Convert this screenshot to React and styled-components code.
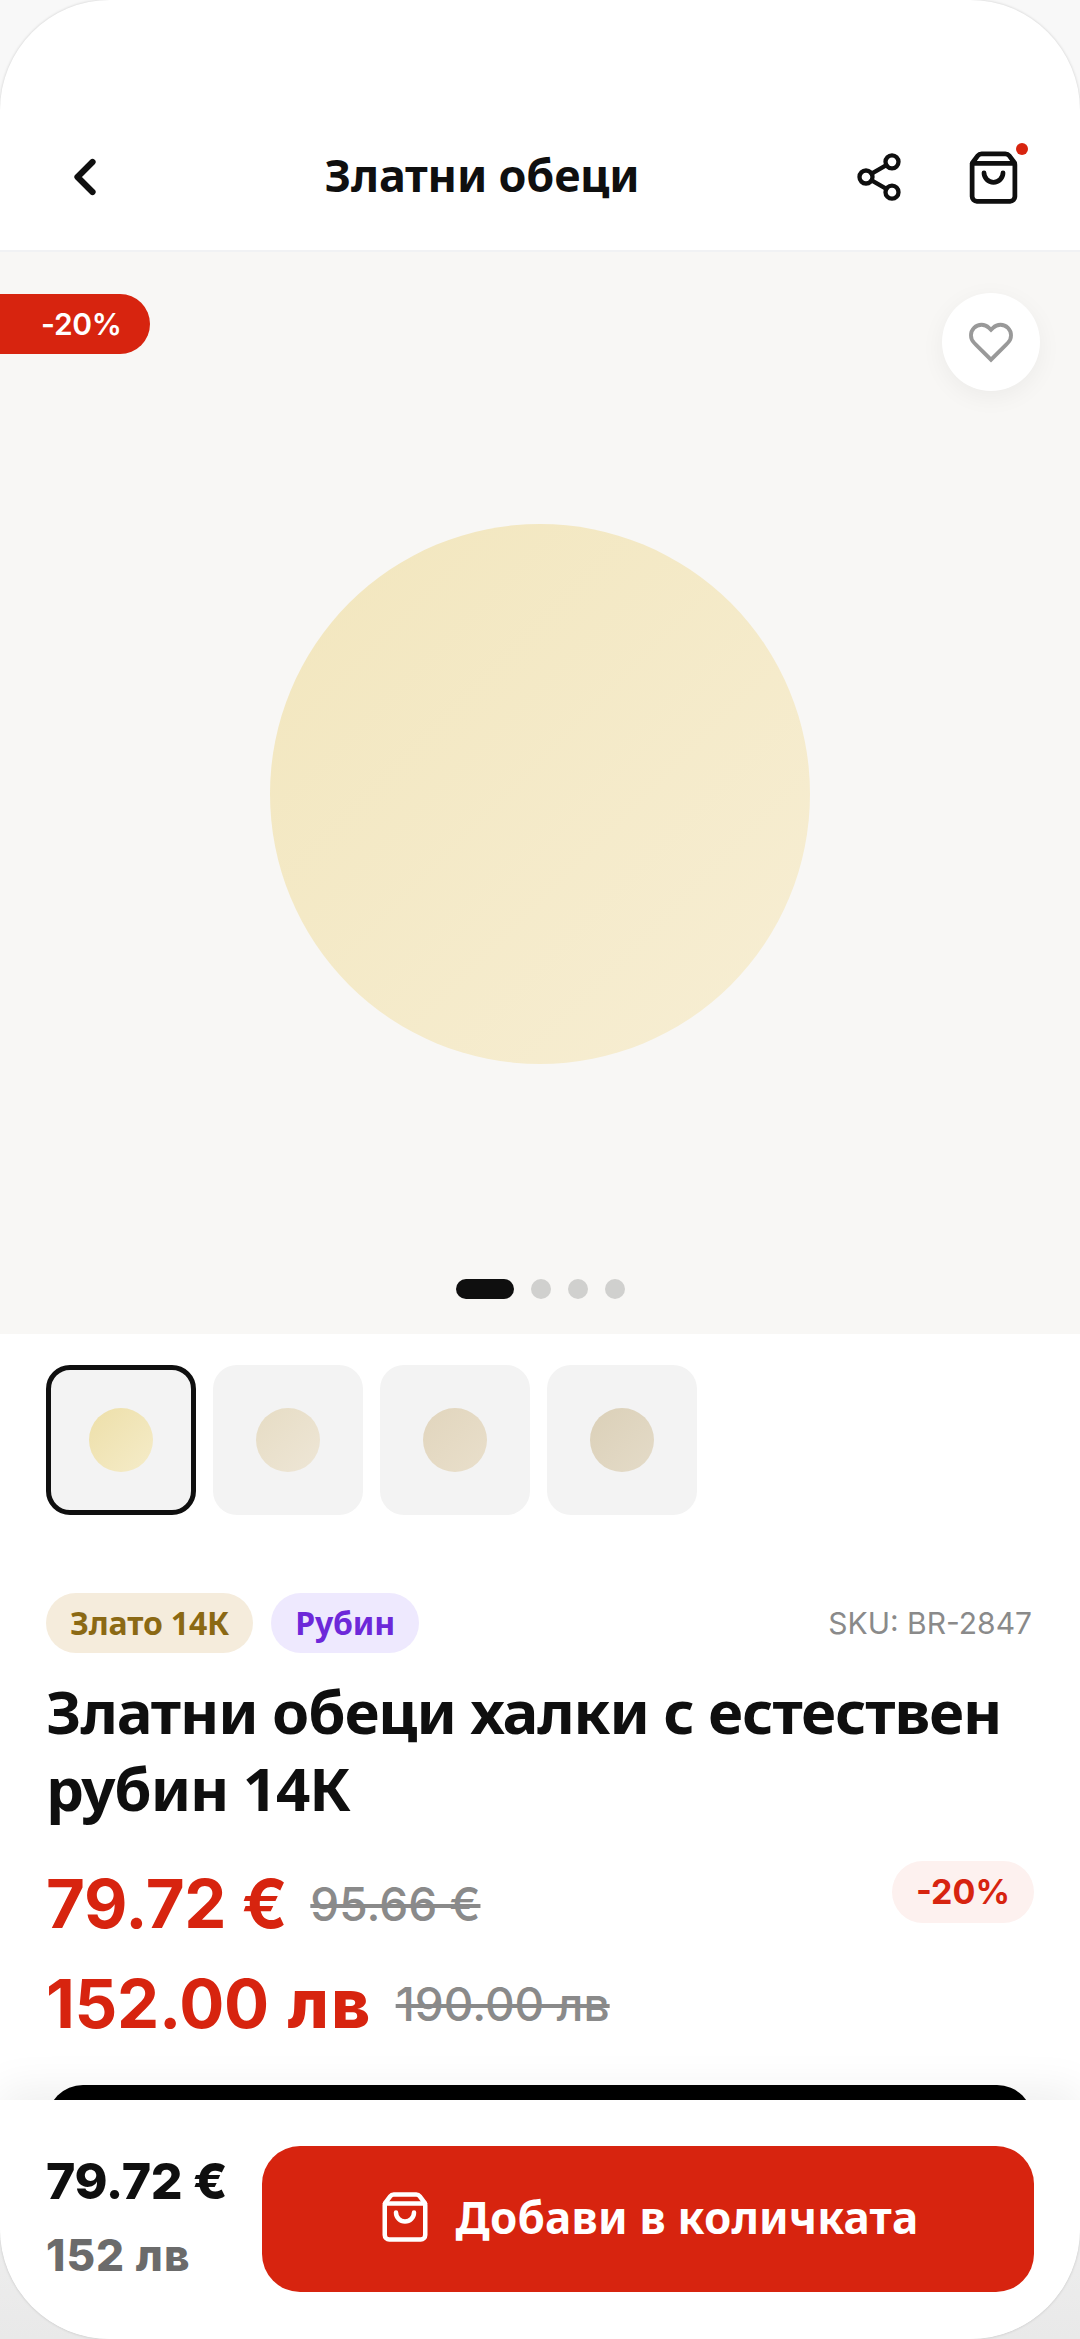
import React from 'react';
import styled, { createGlobalStyle } from 'styled-components';
import { ChevronLeft, Share2, ShoppingBag } from 'lucide-react';

const GlobalStyle = createGlobalStyle`
  html {
    background: linear-gradient(#f8f8f8 0, #f8f8f8 2000px, #e9e9e9 2339px);
  }
  body {
    margin: 0;
    padding: 0;
  }
`;

const RED = '#d7240f';
const INK = '#0f0f0f';
const INTER = 'Inter, "Liberation Sans", sans-serif';
const NOTO = '"Noto Sans", "Open Sans", sans-serif';

const Phone = styled.div`
  position: relative;
  width: 1080px;
  height: 2339px;
  overflow: hidden;
  background: #fff;
  border-radius: 110px;
  box-shadow: 0 0 3px rgba(0, 0, 0, 0.18);
  font-family: ${INTER};
  color: ${INK};
`;

const Header = styled.header`
  height: 252px;
  box-sizing: border-box;
  padding: 148px 58px 0 52px;
  display: flex;
  align-items: flex-start;
  border-bottom: 2px solid #f1f2f4;
`;

const IconBox = styled.div`
  position: relative;
  width: ${p => p.$w}px;
  height: 58px;
  flex: none;
  display: flex;
  align-items: center;
  justify-content: center;
`;

const HeaderTitle = styled.h1`
  flex: 1;
  margin: 0;
  padding-right: 7px;
  font: 700 45px/54px ${NOTO};
  letter-spacing: -0.2px;
  text-align: center;
  white-space: nowrap;
`;

const HeaderActions = styled.div`
  display: flex;
  gap: 60px;
  align-items: center;
`;

const CartDot = styled.span`
  position: absolute;
  top: -5px;
  right: -6px;
  width: 12px;
  height: 12px;
  border-radius: 50%;
  background: ${RED};
`;

const Gallery = styled.section`
  position: relative;
  height: 1082px;
  background: #f8f7f5;
  display: flex;
  flex-direction: column;
  align-items: center;
`;

const Jewel = styled.div`
  width: 540px;
  height: 540px;
  margin-top: 272px;
  border-radius: 50%;
  background: linear-gradient(135deg, #f2e6bd 0%, #f7eed4 100%);
`;

const Dots = styled.div`
  display: flex;
  gap: 17px;
  margin-top: 215px;
`;

const Dot = styled.span`
  height: 20px;
  width: ${p => (p.$active ? 58 : 20)}px;
  border-radius: 10px;
  background: ${p => (p.$active ? INK : '#d0d0ce')};
`;

const SaleFlag = styled.div`
  position: absolute;
  left: 0;
  top: 42px;
  width: 150px;
  height: 60px;
  box-sizing: border-box;
  padding-left: 41px;
  border-radius: 0 30px 30px 0;
  background: ${RED};
  color: #fff;
  font: 600 30px/60px ${INTER};
  letter-spacing: -0.3px;
`;

const FavButton = styled.button`
  position: absolute;
  top: 41px;
  right: 40px;
  width: 98px;
  height: 98px;
  padding: 0;
  border: 0;
  border-radius: 50%;
  background: #fff;
  box-shadow: 0 6px 24px rgba(0, 0, 0, 0.05);
  display: flex;
  align-items: center;
  justify-content: center;
`;

const Thumbs = styled.div`
  display: flex;
  gap: 17px;
  padding: 31px 46px 0;
`;

const Thumb = styled.div`
  width: 150px;
  height: 150px;
  box-sizing: border-box;
  border-radius: 24px;
  background: #f3f3f3;
  border: ${p => (p.$active ? `5px solid ${INK}` : 'none')};
  display: flex;
  align-items: center;
  justify-content: center;
`;

const ThumbDot = styled.span`
  width: 64px;
  height: 64px;
  border-radius: 50%;
  background: ${p => p.$bg};
`;

const Info = styled.section`
  padding: 78px 47px 0 46px;
`;

const MetaRow = styled.div`
  display: flex;
  align-items: center;
  gap: 18px;
`;

const Tag = styled.span`
  height: 60px;
  padding: 0 24px;
  border-radius: 30px;
  background: ${p => p.$bg};
  color: ${p => p.$fg};
  font: 700 32px/60px ${NOTO};
  letter-spacing: -0.15px;
  white-space: nowrap;
`;

const Sku = styled.span`
  margin-left: auto;
  margin-right: 1px;
  color: #8a8a8a;
  font: 400 30px/60px ${INTER};
`;

const ProductTitle = styled.h2`
  margin: 20px 0 0;
  font: 700 60px/77px ${NOTO};
  letter-spacing: -1.1px;
`;

const PriceBlock = styled.div`
  position: relative;
  margin-top: 27px;
`;

const PriceRow = styled.div`
  display: flex;
  align-items: center;
  gap: 23px;
  height: 100px;
`;

const Price = styled.span`
  color: ${RED};
  font: 700 67px/100px ${INTER};
  letter-spacing: -0.3px;
`;

const Unit = styled.span`
  margin-left: 3px;
  font-weight: 800;
  letter-spacing: 2.5px;
`;

const OldPrice = styled.span`
  color: #8a8a8a;
  font: 500 46px/100px ${INTER};
  text-decoration: line-through;
`;

const SaleChip = styled.span`
  position: absolute;
  right: -1px;
  top: 7px;
  height: 62px;
  padding: 0 24px;
  border-radius: 31px;
  background: #fdf1ef;
  color: ${RED};
  font: 700 34px/62px ${INTER};
`;

const BuyNow = styled.div`
  position: absolute;
  left: 47px;
  right: 47px;
  top: 2085px;
  height: 100px;
  border-radius: 36px;
  background: #000;
`;

const BottomBar = styled.footer`
  position: absolute;
  left: 0;
  right: 0;
  bottom: 0;
  height: 239px;
  box-sizing: border-box;
  padding: 46px 46px 0 46px;
  background: #fff;
  box-shadow: 0 -10px 44px rgba(0, 0, 0, 0.07);
  border-radius: 0 0 110px 110px;
  display: flex;
  align-items: flex-start;
  gap: 36px;
`;

const Totals = styled.div`
  width: 180px;
  flex: none;
  display: flex;
  flex-direction: column;
  padding-top: 5px;
`;

const TotalMain = styled.span`
  font: 800 50px/60px ${INTER};
  letter-spacing: -0.3px;
  white-space: nowrap;
`;

const TotalSub = styled.span`
  margin-top: 14px;
  color: #6b6b6b;
  font: 800 44px/60px ${INTER};
  letter-spacing: 1px;
  white-space: nowrap;
`;

const AddButton = styled.button`
  flex: 1;
  height: 146px;
  padding: 0 0 5px;
  border: 0;
  border-radius: 38px;
  background: ${RED};
  color: #fff;
  font: 700 44px/60px ${NOTO};
  letter-spacing: 0.2px;
  display: flex;
  align-items: center;
  justify-content: center;
  gap: 24px;
`;

const HeartIcon = () => (
  <svg width="46" height="46" viewBox="0 0 24 24" fill="none" stroke="#999" strokeWidth="2">
    <path d="M20.84 4.61a5.5 5.5 0 0 0-7.78 0L12 5.67l-1.06-1.06a5.5 5.5 0 0 0-7.78 7.78l1.06 1.06L12 21.23l7.78-7.78 1.06-1.06a5.5 5.5 0 0 0 0-7.78z" />
  </svg>
);

const thumbs = [
  'linear-gradient(135deg, #eddfa9, #f5ecc9)',
  'linear-gradient(135deg, #e6dcc4, #eee6d6)',
  'linear-gradient(135deg, #e1d5bd, #e9dfcb)',
  'linear-gradient(135deg, #dbd0b8, #e4dbc8)',
];

export default function App() {
  return (
    <Phone>
      <GlobalStyle />
      <Header>
        <IconBox $w={66}>
          <ChevronLeft size={60} strokeWidth={2.5} />
        </IconBox>
        <HeaderTitle>Златни обеци</HeaderTitle>
        <HeaderActions>
          <IconBox $w={52}>
            <Share2 size={52} strokeWidth={2} />
          </IconBox>
          <IconBox $w={57}>
            <ShoppingBag size={57} strokeWidth={2} />
            <CartDot />
          </IconBox>
        </HeaderActions>
      </Header>

      <Gallery>
        <SaleFlag>-20%</SaleFlag>
        <FavButton>
          <HeartIcon />
        </FavButton>
        <Jewel />
        <Dots>
          <Dot $active />
          <Dot />
          <Dot />
          <Dot />
        </Dots>
      </Gallery>

      <Thumbs>
        {thumbs.map((bg, i) => (
          <Thumb key={i} $active={i === 0}>
            <ThumbDot $bg={bg} />
          </Thumb>
        ))}
      </Thumbs>

      <Info>
        <MetaRow>
          <Tag $bg="#f5ecdc" $fg="#8b6914">Злато 14К</Tag>
          <Tag $bg="#eee9fe" $fg="#6d28d9">Рубин</Tag>
          <Sku>SKU: BR-2847</Sku>
        </MetaRow>
        <ProductTitle>Златни обеци халки с естествен рубин 14К</ProductTitle>
        <PriceBlock>
          <SaleChip>-20%</SaleChip>
          <PriceRow>
            <Price>79.72 €</Price>
            <OldPrice>95.66 €</OldPrice>
          </PriceRow>
          <PriceRow>
            <Price>152.00 <Unit>лв</Unit></Price>
            <OldPrice>190.00 лв</OldPrice>
          </PriceRow>
        </PriceBlock>
      </Info>

      <BuyNow />
      <BottomBar>
        <Totals>
          <TotalMain>79.72 €</TotalMain>
          <TotalSub>152 лв</TotalSub>
        </Totals>
        <AddButton>
          <ShoppingBag size={54} strokeWidth={2} />
          Добави в количката
        </AddButton>
      </BottomBar>
    </Phone>
  );
}
